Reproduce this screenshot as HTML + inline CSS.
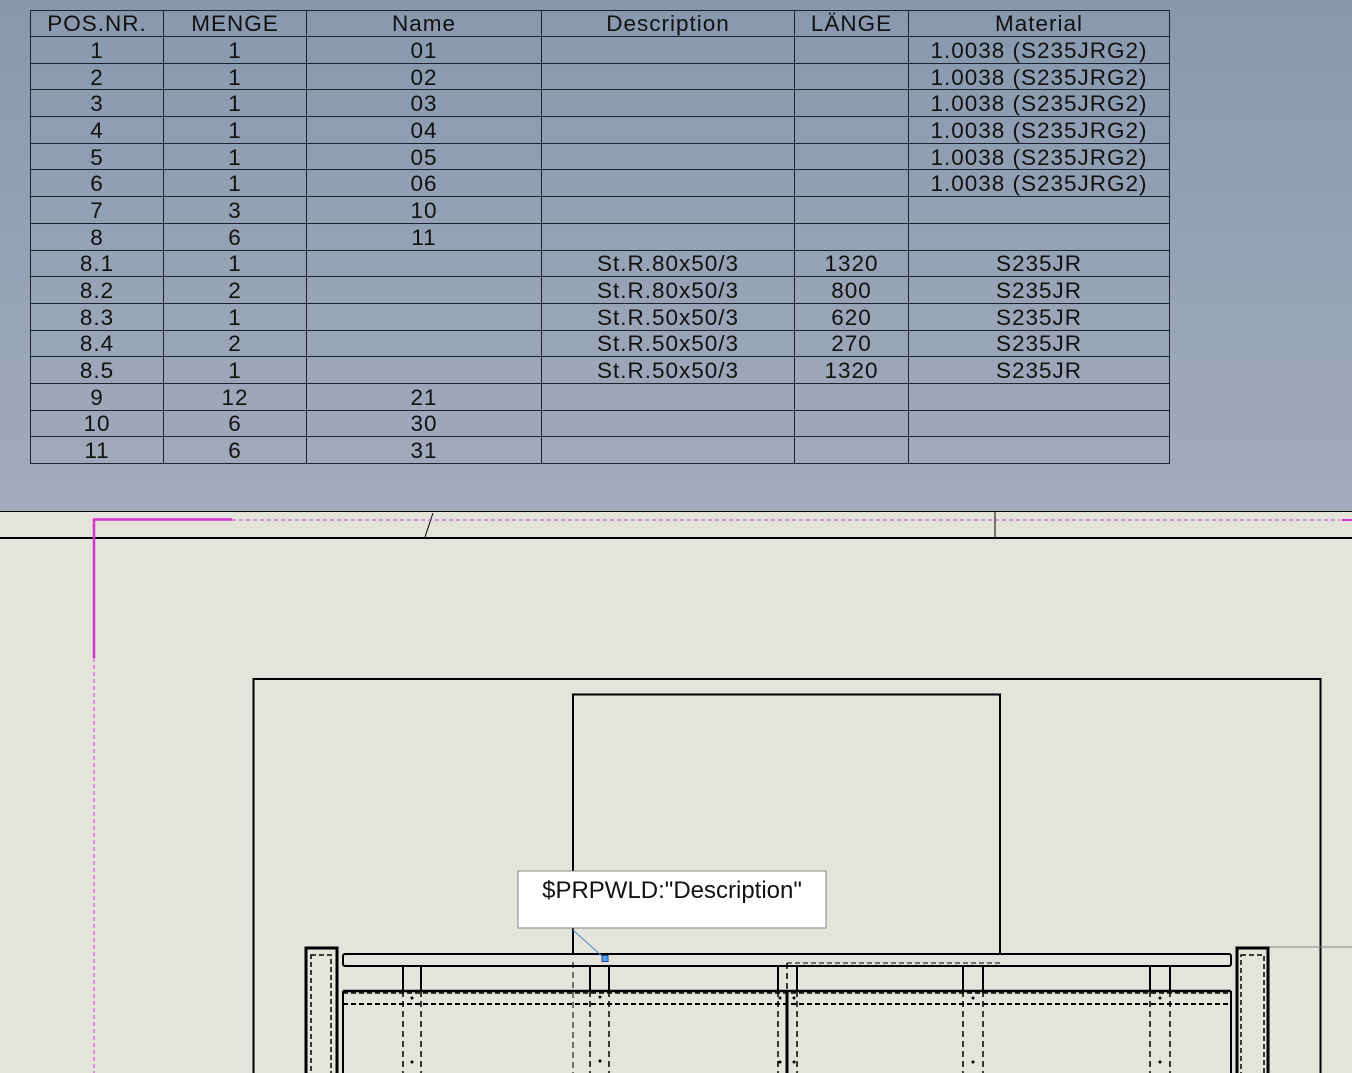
<!DOCTYPE html>
<html><head><meta charset="utf-8">
<style>
html,body{margin:0;padding:0;width:1352px;height:1073px;overflow:hidden;background:#e4e4da;font-family:"Liberation Sans","DejaVu Sans",sans-serif;}
#top{position:absolute;left:0;top:0;width:1352px;height:511px;background:linear-gradient(#8998ae,#a3abbc);}
table{position:absolute;left:30px;top:10px;border-collapse:collapse;table-layout:fixed;width:1139px;}
td{border:1px solid #1c2230;padding:2px 0 0 0;text-align:center;font-size:22.5px;line-height:20px;color:#111;height:23.7px;overflow:hidden;white-space:nowrap;letter-spacing:1px;box-sizing:content-box}
tr.h td{height:25px;padding-top:0}
svg{position:absolute;left:0;top:0}
</style></head><body>
<div id="top"></div>
<table>
<colgroup><col style="width:133px"><col style="width:143px"><col style="width:235px"><col style="width:253px"><col style="width:114px"><col style="width:261px"></colgroup>
<tr class="h"><td>POS.NR.</td><td>MENGE</td><td>Name</td><td>Description</td><td>LÄNGE</td><td>Material</td></tr>
<tr><td>1</td><td>1</td><td>01</td><td></td><td></td><td>1.0038 (S235JRG2)</td></tr>
<tr><td>2</td><td>1</td><td>02</td><td></td><td></td><td>1.0038 (S235JRG2)</td></tr>
<tr><td>3</td><td>1</td><td>03</td><td></td><td></td><td>1.0038 (S235JRG2)</td></tr>
<tr><td>4</td><td>1</td><td>04</td><td></td><td></td><td>1.0038 (S235JRG2)</td></tr>
<tr><td>5</td><td>1</td><td>05</td><td></td><td></td><td>1.0038 (S235JRG2)</td></tr>
<tr><td>6</td><td>1</td><td>06</td><td></td><td></td><td>1.0038 (S235JRG2)</td></tr>
<tr><td>7</td><td>3</td><td>10</td><td></td><td></td><td></td></tr>
<tr><td>8</td><td>6</td><td>11</td><td></td><td></td><td></td></tr>
<tr><td>8.1</td><td>1</td><td></td><td>St.R.80x50/3</td><td>1320</td><td>S235JR</td></tr>
<tr><td>8.2</td><td>2</td><td></td><td>St.R.80x50/3</td><td>800</td><td>S235JR</td></tr>
<tr><td>8.3</td><td>1</td><td></td><td>St.R.50x50/3</td><td>620</td><td>S235JR</td></tr>
<tr><td>8.4</td><td>2</td><td></td><td>St.R.50x50/3</td><td>270</td><td>S235JR</td></tr>
<tr><td>8.5</td><td>1</td><td></td><td>St.R.50x50/3</td><td>1320</td><td>S235JR</td></tr>
<tr><td>9</td><td>12</td><td>21</td><td></td><td></td><td></td></tr>
<tr><td>10</td><td>6</td><td>30</td><td></td><td></td><td></td></tr>
<tr><td>11</td><td>6</td><td>31</td><td></td><td></td><td></td></tr>
</table>
<svg width="1352" height="1073" viewBox="0 0 1352 1073" fill="none" stroke="#000">
<line x1="0" y1="511.5" x2="1352" y2="511.5" stroke-width="1"/>
<line x1="0" y1="538" x2="1352" y2="538" stroke-width="2"/>
<line x1="425" y1="537" x2="433" y2="513" stroke-width="1"/>
<line x1="995" y1="512" x2="995" y2="537" stroke-width="1"/>
<path d="M94 658 V519.5 H232" stroke="#d633d0" stroke-width="2.5"/>
<line x1="232" y1="520" x2="1340" y2="520" stroke="#d633d0" stroke-width="1" stroke-dasharray="4 3"/>
<line x1="1342" y1="520" x2="1352" y2="520" stroke="#d633d0" stroke-width="2"/>
<line x1="94" y1="658" x2="94" y2="1073" stroke="#d633d0" stroke-width="1" stroke-dasharray="4 3"/>
<rect x="253.5" y="679" width="1067" height="400" stroke-width="2"/>
<rect x="573" y="694.5" width="427" height="268" stroke-width="2"/>
<rect x="518" y="871" width="308" height="57" fill="#fff" stroke="#888" stroke-width="1"/>
<text x="672" y="898" fill="#111" stroke="none" font-size="24" text-anchor="middle" font-family="Liberation Sans, sans-serif">$PRPWLD:"Description"</text>
<rect x="343" y="954" width="888" height="12" rx="2" stroke-width="2" fill="#e4e4da"/>
<line x1="787" y1="963" x2="1000" y2="963" stroke-width="1" stroke-dasharray="5 3"/>
<line x1="573" y1="930" x2="603" y2="957" stroke="#4d8ac9" stroke-width="1"/>
<rect x="602" y="955.5" width="6" height="6" fill="#5aa0ff" stroke="#1f4c8c" stroke-width="1"/>
<line x1="1268" y1="947" x2="1352" y2="947" stroke="#888" stroke-width="1"/>
<path d="M306 1073 V948 H337 V1073" stroke-width="3"/>
<path d="M1237 1073 V948 H1268 V1073" stroke-width="3"/>
<g stroke-width="1.5" stroke-dasharray="5 3">
<rect x="311" y="955" width="20" height="130"/>
<rect x="1241" y="955" width="23" height="130"/>
<line x1="343" y1="993" x2="1231" y2="993"/>
<line x1="343" y1="1004" x2="1231" y2="1004" stroke-width="2"/>
</g>
<line x1="343" y1="991" x2="1231" y2="991" stroke-width="2.5"/>
<line x1="343" y1="991" x2="343" y2="1073" stroke-width="2"/>
<line x1="1231" y1="991" x2="1231" y2="1073" stroke-width="2"/>
<g stroke-width="2">
<path d="M403 966V991M421 966V991M590 966V991M609 966V991M778 966V991M797 966V991M963 966V991M983 966V991M1150 966V991M1170 966V991"/>
</g>
<g stroke-width="1.5" stroke-dasharray="6 4">
<path d="M403 991V1073M421 991V1073M590 991V1073M609 991V1073M778 991V1073M797 991V1073M963 991V1073M983 991V1073M1150 991V1073M1170 991V1073M787 963V1073"/>
</g>
<line x1="787" y1="991" x2="787" y2="1073" stroke-width="3"/>
<line x1="573" y1="962" x2="573" y2="1073" stroke-width="1" stroke-dasharray="6 4"/>
<g fill="#000" stroke="none">
<circle cx="412" cy="998" r="1.5"/><circle cx="412" cy="1062" r="1.5"/>
<circle cx="600" cy="997" r="1.5"/><circle cx="600" cy="1061" r="1.5"/>
<circle cx="780" cy="998" r="1.5"/><circle cx="780" cy="1062" r="1.5"/>
<circle cx="794" cy="998" r="1.5"/><circle cx="794" cy="1062" r="1.5"/>
<circle cx="973" cy="998" r="1.5"/><circle cx="973" cy="1062" r="1.5"/>
<circle cx="1160" cy="998" r="1.5"/><circle cx="1160" cy="1062" r="1.5"/>
</g>
</svg>
</body></html>
